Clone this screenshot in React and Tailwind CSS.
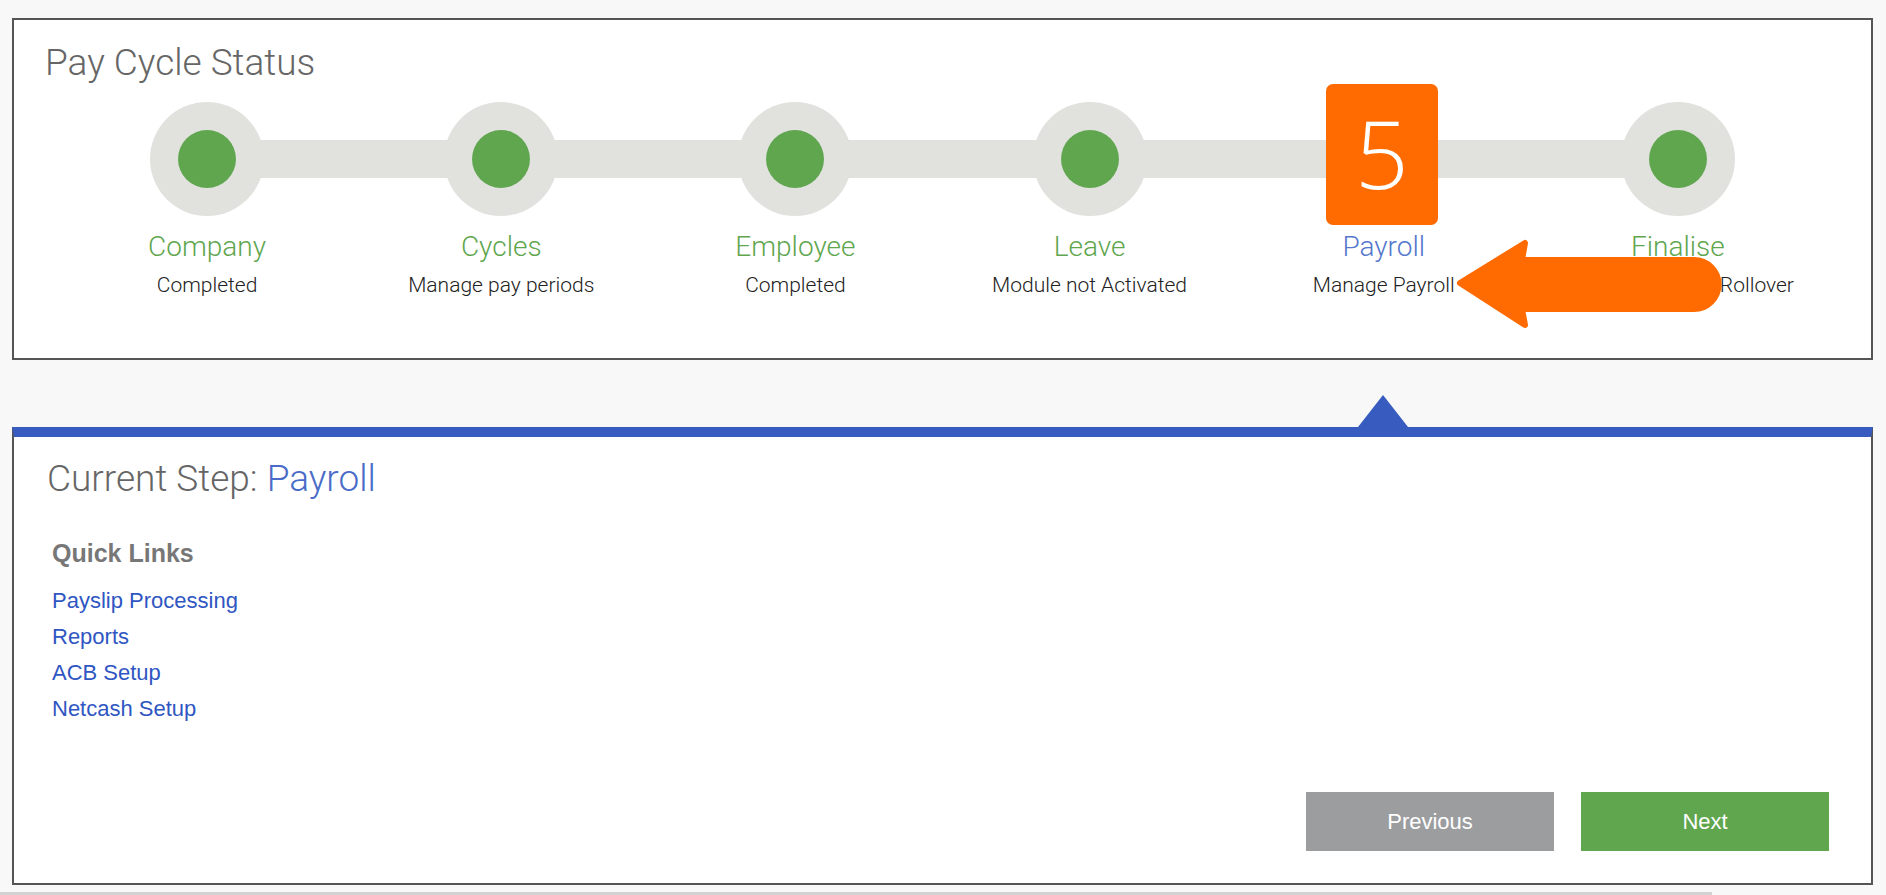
const steps = [
  { name: "Company", sub: "Completed" },
  { name: "Cycles", sub: "Manage pay periods" },
  { name: "Employee", sub: "Completed" },
  { name: "Leave", sub: "Module not Activated" },
  { name: "Payroll", sub: "Manage Payroll", current: true, number: 5 },
  { name: "Finalise", sub: "Complete Period Rollover" },
];

const links = ["Payslip Processing", "Reports", "ACB Setup", "Netcash Setup"];

// thin Helvetica Neue look-alike for headings and step labels
const thin = "font-['Roboto','Liberation_Sans',sans-serif] font-light";

function Step({ name, sub, current, number }) {
  return (
    <div className="flex flex-col items-center">
      <div className="relative h-[114px] w-full flex justify-center">
        {current ? (
          <div className="absolute top-[-18px] left-1/2 -translate-x-[58px] w-[112px] h-[141px] rounded-[7px] bg-[#ff6b00] flex items-center justify-center">
            <span className="font-['Open_Sans',sans-serif] font-light text-[94px] leading-none text-white pb-[4px]">
              {number}
            </span>
          </div>
        ) : (
          <div className="w-[114px] h-[114px] rounded-full bg-[#e1e1de] flex items-center justify-center">
            <div className="w-[58px] h-[58px] rounded-full bg-[#5fa64f]" />
          </div>
        )}
      </div>
      <div
        className={`${thin} mt-[16px] text-[28px] leading-[30px] ${
          current ? "text-[#5577cc]" : "text-[#5fa64f]"
        }`}
      >
        {name}
      </div>
      <div
        className={`${thin} mt-[10px] text-[21px] leading-[26px] text-[#222] whitespace-nowrap`}
      >
        {sub}
      </div>
    </div>
  );
}

function Arrow() {
  return (
    <svg
      className="absolute left-[1436px] top-[215px]"
      width="280"
      height="100"
      viewBox="0 0 280 100"
    >
      <path
        d="M10 48 L75 8 L72 25 L244 25 A24.5 24.5 0 0 1 244 74 L72 74 L75 90 Z"
        fill="#ff6b00"
        stroke="#ff6b00"
        strokeWidth="6"
        strokeLinejoin="round"
      />
    </svg>
  );
}

export default function App() {
  return (
    <div className="min-h-screen bg-[#f8f8f8] font-['Liberation_Sans',Arial,sans-serif]">
      <div className="pt-[18px] pl-[12px] pr-[13px]">
        <div className="relative bg-white border-2 border-[#555] pt-[25px] pb-[60px]">
          <h1 className={`${thin} pl-[31px] text-[37px] leading-[35px] text-[#666]`}>
            Pay Cycle Status
          </h1>

          <div className="relative mt-[22px] px-[46px]">
            <div className="absolute left-[193px] right-[193px] top-[38px] h-[38px] bg-[#e1e1de]" />
            <div className="relative grid grid-cols-6">
              {steps.map((s) => (
                <Step key={s.name} {...s} />
              ))}
            </div>
          </div>

          <Arrow />
        </div>

        <div className="h-[67px] flex items-end">
          <div className="ml-[1346px] w-0 h-0 border-x-[25px] border-x-transparent border-b-[32px] border-b-[#375bbf]" />
        </div>

        <div className="bg-white border-x-2 border-b-2 border-[#555] border-t-[10px] border-t-[#375bbf] pt-[24px] pb-[32px] pl-[33px] pr-[42px]">
          <h2 className={`${thin} text-[37px] leading-[35px] text-[#666]`}>
            Current Step: <span className="text-[#4a6cc8]">Payroll</span>
          </h2>

          <div className="pl-[5px]">
            <h3 className="mt-[42px] text-[25px] leading-[30px] font-bold text-[#777]">
              Quick Links
            </h3>
            <ul className="mt-[15px]">
              {links.map((l) => (
                <li key={l} className="text-[22px] leading-[36px]">
                  <a href="#" className="text-[#2f56c2]">
                    {l}
                  </a>
                </li>
              ))}
            </ul>
          </div>

          <div className="mt-[65px] flex justify-end gap-[27px]">
            <button className="w-[248px] h-[59px] bg-[#9c9d9f] text-white text-[22px]">
              Previous
            </button>
            <button className="w-[248px] h-[59px] bg-[#5fa64f] text-white text-[22px]">
              Next
            </button>
          </div>
        </div>
      </div>
      <div className="mt-[7px] h-[3px] w-[1712px] bg-[#d2d2d2]" />
    </div>
  );
}
